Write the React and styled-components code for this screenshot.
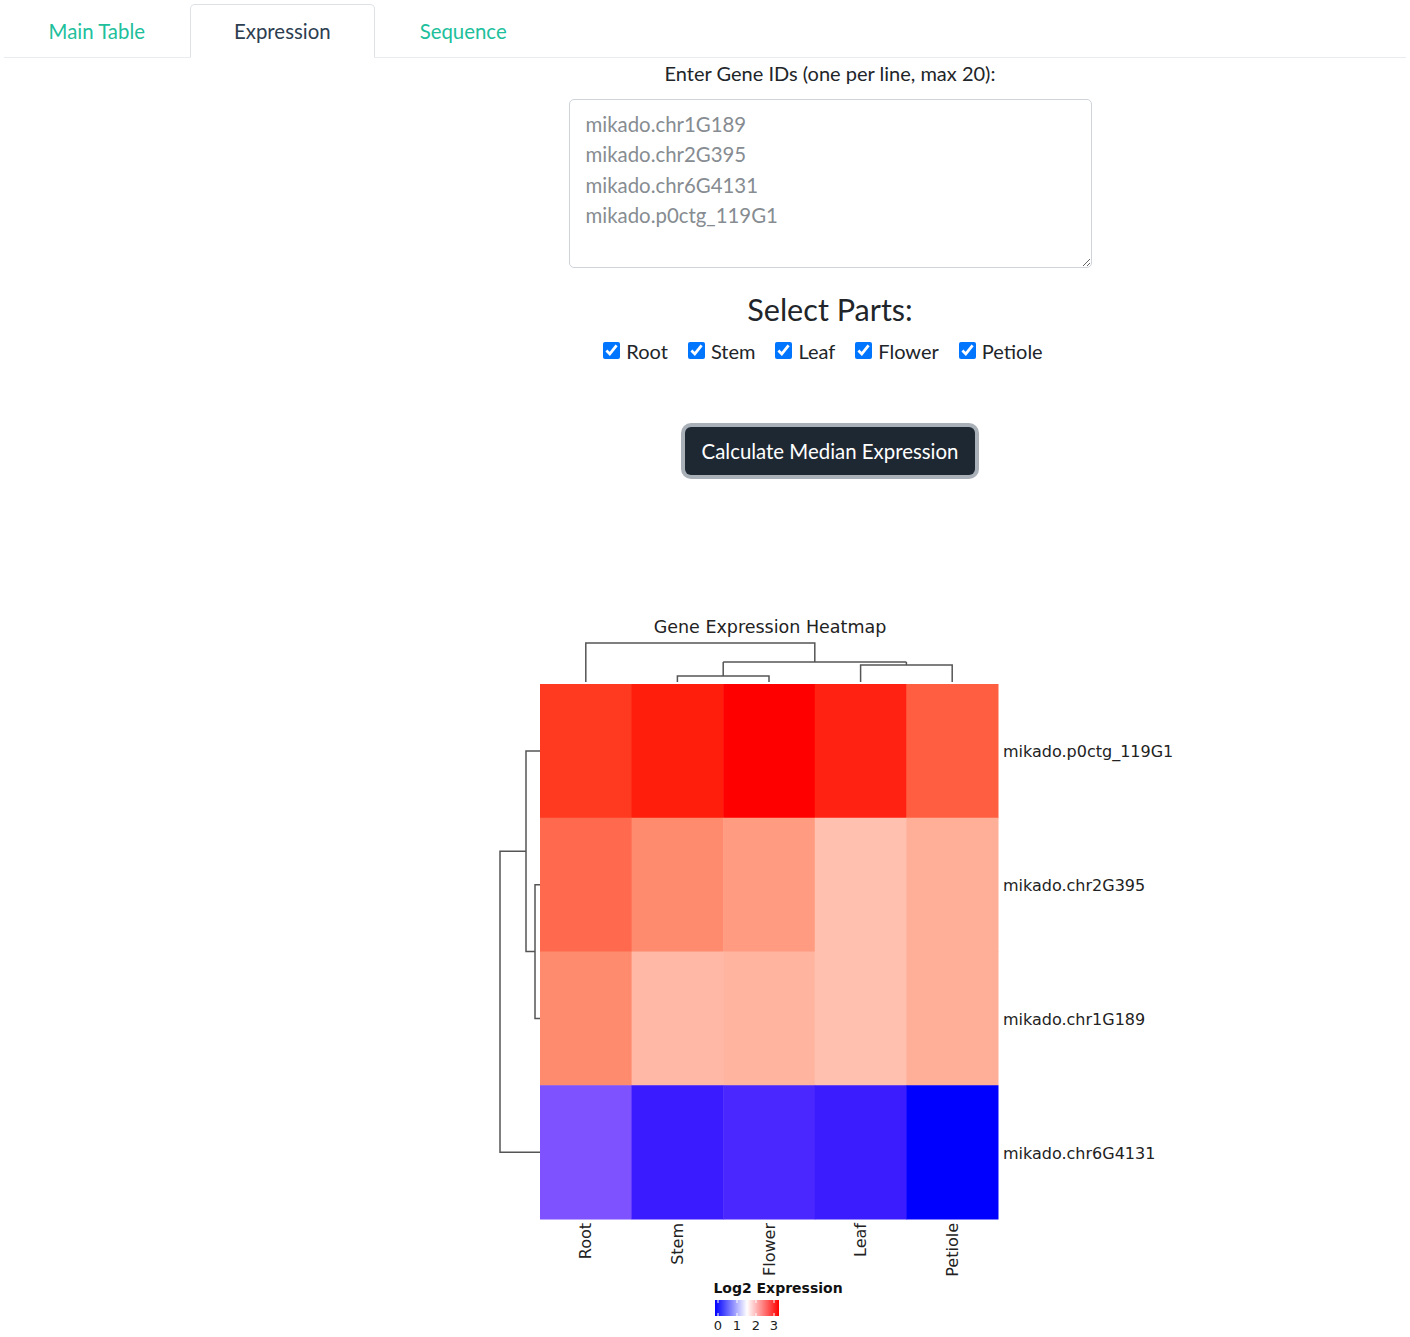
import React, { useState } from "react";
import styled, { createGlobalStyle } from "styled-components";

const GlobalStyle = createGlobalStyle`
    body {
        margin: 0;
        background: #fff;
        font-family: Lato, "Liberation Sans", sans-serif;
        color: #212529;
    }
`;

const parts = ["Root", "Stem", "Leaf", "Flower", "Petiole"];
const columns = ["Root", "Stem", "Flower", "Leaf", "Petiole"];

const heatRows = [
    { gene: "mikado.p0ctg_119G1", colors: ["#ff3a20", "#ff1d0c", "#ff0000", "#ff2212", "#ff5f40"] },
    { gene: "mikado.chr2G395", colors: ["#ff694d", "#ff8b6e", "#ff9b80", "#ffc0b0", "#ffae98"] },
    { gene: "mikado.chr1G189", colors: ["#ff8b6e", "#ffb8a6", "#ffb4a0", "#ffc0b0", "#ffae98"] },
    { gene: "mikado.chr6G4131", colors: ["#7f52ff", "#3a1aff", "#4a26ff", "#3b1cff", "#0000ff"] },
];

const Page = styled.div`
    padding: 4px 4px 0 4px;
`;

const TabBar = styled.nav`
    display: flex;
    border-bottom: 1px solid #e9ecef;
`;

const Tab = styled.button`
    font-family: inherit;
    font-size: 20.4px;
    line-height: 30px;
    padding: 11px 43.5px;
    margin-bottom: -1px;
    background: ${(p) => (p.$active ? "#fff" : "transparent")};
    cursor: pointer;
    border: 1px solid ${(p) => (p.$active ? "#dee2e6" : "transparent")};
    border-bottom-color: ${(p) => (p.$active ? "#fff" : "transparent")};
    border-radius: 5px 5px 0 0;
    color: ${(p) => (p.$active ? "#2c3e50" : "#20bf9c")};
`;

const Layout = styled.div`
    display: flex;
`;

const Sidebar = styled.aside`
    width: 250px;
    flex-shrink: 0;
`;

const Main = styled.main`
    flex: 1;
    display: flex;
    flex-direction: column;
    align-items: center;
`;

const Label = styled.label`
    font-size: 20px;
    line-height: 30px;
    color: #212529;
`;

const GeneInput = styled.textarea`
    box-sizing: border-box;
    margin-top: 11px;
    width: 523px;
    height: 169px;
    padding: 9px 16px;
    border: 1px solid #ced4da;
    border-radius: 5px;
    font-family: inherit;
    font-size: 20.4px;
    line-height: 30.4px;
    color: #212529;
    resize: vertical;

    &::placeholder {
        color: #868c91;
    }
`;

const Heading = styled.h3`
    margin: 24px 0 0;
    font-size: 30.6px;
    font-weight: 400;
    line-height: 36px;
    color: #212529;
`;

const CheckRow = styled.div`
    margin-top: 8px;
    display: flex;
    justify-content: center;
    padding-left: 6px;
`;

const CheckItem = styled.label`
    display: flex;
    align-items: center;
    gap: 6px;
    margin-right: 20px;
    font-size: 20px;
    line-height: 30px;
    cursor: pointer;
`;

const CheckBox = styled.input`
    width: 17px;
    height: 17px;
    margin: 0;
    accent-color: #0075ff;
    position: relative;
    top: -1px;
`;

const CalcButton = styled.button`
    margin-top: 61px;
    padding: 9px 17px;
    font-family: inherit;
    font-size: 20.4px;
    line-height: 30px;
    color: #fff;
    background: #1e2833;
    border: none;
    border-radius: 6px;
    box-shadow: 0 0 0 4px #a9b0b7;
    cursor: pointer;
`;

const Figure = styled.svg`
    display: block;
    margin-top: 125px;
    font-family: "DejaVu Sans", sans-serif;
`;

const X0 = 60;
const Y0 = 84;
const CW = 91.6;
const RH = 133.75;

const colX = (i) => X0 + CW * i + CW / 2;
const rowY = (i) => Y0 + RH * i + RH / 2;

const Heatmap = () => {
    const line = { stroke: "#555", strokeWidth: 1.5, fill: "none" };
    return (
        <Figure width="700" height="737" viewBox="0 0 700 737">
            <defs>
                <linearGradient id="bwr" x1="0" x2="1" y1="0" y2="0">
                    <stop offset="0" stopColor="#0000ff" />
                    <stop offset="0.5" stopColor="#ffffff" />
                    <stop offset="1" stopColor="#ff0000" />
                </linearGradient>
            </defs>
            <text x="290" y="33" fontSize="17.5" textAnchor="middle" fill="#222">
                Gene Expression Heatmap
            </text>

            {/* column dendrogram */}
            <path
                {...line}
                d={`M${colX(0)} 82 V43 H334.8 V62
                    M243.2 62 H426.4
                    M243.2 62 V76 M${colX(1)} 82 V76 H${colX(2)} V82
                    M426.4 62 V65 M${colX(3)} 82 V65 H${colX(4)} V82`}
            />

            {/* row dendrogram */}
            <path
                {...line}
                d={`M60 ${rowY(0)} H46 V351.5 H55
                    M60 ${rowY(1)} H55 V${rowY(2)} H60
                    M46 251.2 H20 V${rowY(3)} H60`}
            />

            {heatRows.map((row, r) =>
                row.colors.map((c, ci) => (
                    <rect
                        key={`${r}-${ci}`}
                        x={X0 + CW * ci}
                        y={Y0 + RH * r}
                        width={CW + 0.5}
                        height={RH + 0.5}
                        fill={c}
                    />
                ))
            )}

            {heatRows.map((row, r) => (
                <text key={row.gene} x="523" y={rowY(r) + 1} fontSize="16" dominantBaseline="central" fill="#222">
                    {row.gene}
                </text>
            ))}

            {columns.map((name, i) => (
                <text
                    key={name}
                    transform={`translate(${colX(i)} 623) rotate(-90)`}
                    fontSize="16"
                    textAnchor="end"
                    dominantBaseline="central"
                    fill="#222"
                >
                    {name}
                </text>
            ))}

            <text x="298" y="693" fontSize="14" fontWeight="bold" textAnchor="middle" fill="#111">
                Log2 Expression
            </text>
            <rect x="235" y="700" width="64" height="16" fill="url(#bwr)" />
            {[238, 257, 276, 294].map((x, i) => (
                <g key={x}>
                    <line x1={x} x2={x} y1="700" y2="703" stroke="#fff" strokeWidth="1" />
                    <line x1={x} x2={x} y1="713" y2="716" stroke="#fff" strokeWidth="1" />
                    <text x={x} y="730" fontSize="13" textAnchor="middle" fill="#222">
                        {i}
                    </text>
                </g>
            ))}
        </Figure>
    );
};

const App = () => {
    const [tab, setTab] = useState("Expression");
    const [checked, setChecked] = useState(parts.map(() => true));

    const toggle = (i) => {
        const next = [...checked];
        next[i] = !next[i];
        setChecked(next);
    };

    return (
        <>
            <GlobalStyle />
            <Page>
                <TabBar>
                    {["Main Table", "Expression", "Sequence"].map((t) => (
                        <Tab key={t} $active={tab === t} onClick={() => setTab(t)}>
                            {t}
                        </Tab>
                    ))}
                </TabBar>
                <Layout>
                    <Sidebar />
                    <Main>
                        <Label htmlFor="genes">Enter Gene IDs (one per line, max 20):</Label>
                        <GeneInput
                            id="genes"
                            placeholder={"mikado.chr1G189\nmikado.chr2G395\nmikado.chr6G4131\nmikado.p0ctg_119G1"}
                        />
                        <Heading>Select Parts:</Heading>
                        <CheckRow>
                            {parts.map((p, i) => (
                                <CheckItem key={p}>
                                    <CheckBox type="checkbox" checked={checked[i]} onChange={() => toggle(i)} />
                                    {p}
                                </CheckItem>
                            ))}
                        </CheckRow>
                        <CalcButton>Calculate Median Expression</CalcButton>
                        <Heatmap />
                    </Main>
                </Layout>
            </Page>
        </>
    );
};

export default App;
